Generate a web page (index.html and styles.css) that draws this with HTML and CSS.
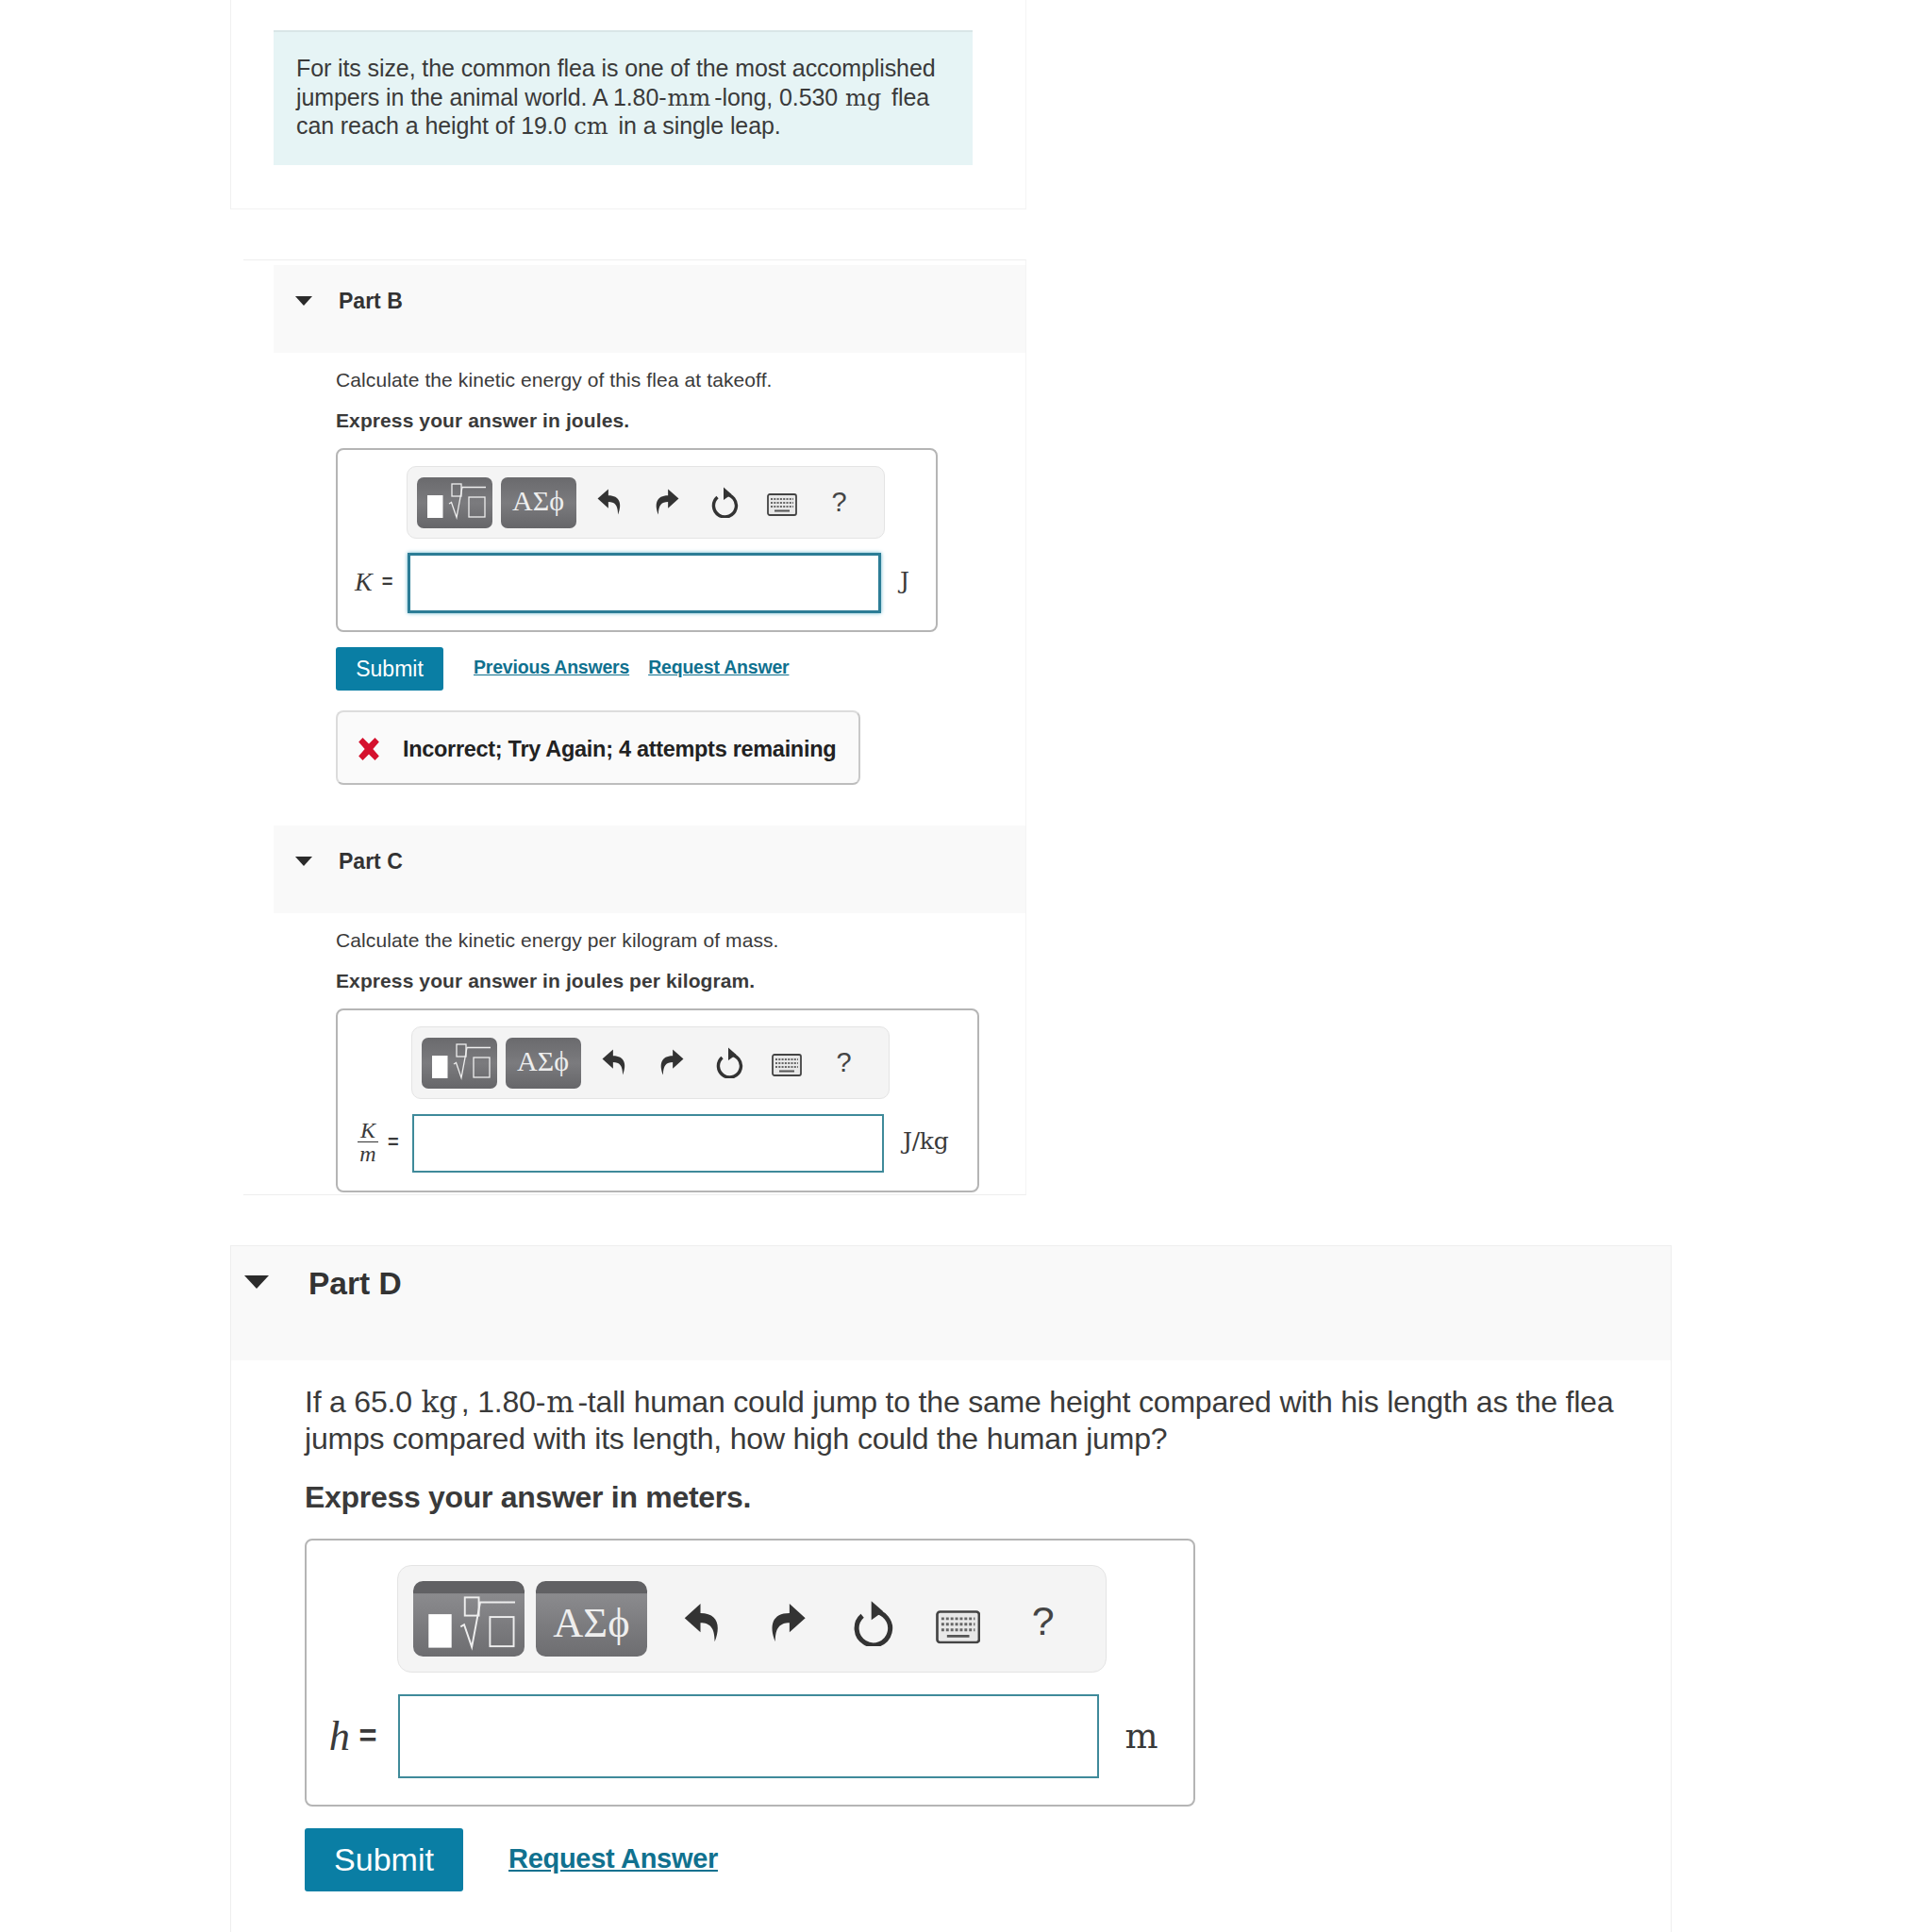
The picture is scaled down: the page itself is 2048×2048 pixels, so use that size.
FILE: index.html
```html
<!DOCTYPE html>
<html lang="en">
<head>
    <meta charset="UTF-8">
    <title>Part B, C, D</title>
    <link rel="stylesheet" href="styles.css">
</head>
<body>
    <svg class="defs" width="0" height="0">
        <symbol id="i-template" viewBox="0 0 80 54">
            <rect x="11" y="19" width="16.500" height="24" fill="#fff"/>
            <rect x="37" y="7" width="10" height="13" fill="none" stroke="#eee" stroke-width="1.300"/>
            <path d="M34 28l2.500-1.500 5.500 16 6-32h25" fill="none" stroke="#eee" stroke-width="1.300"/>
            <rect x="55" y="21" width="17" height="21" fill="none" stroke="#eee" stroke-width="1.300"/>
        </symbol>
        <symbol id="i-undo" viewBox="0 0 26 30">
            <path d="M12 3L2 12l10 9v-6c6 0 9 3 9 12 4-10 2-18-9-18z" fill="#333"/>
        </symbol>
        <symbol id="i-redo" viewBox="0 0 26 30">
            <path d="M14 3l10 9-10 9v-6c-6 0-9 3-9 12C1 17 3 9 14 9z" fill="#333"/>
        </symbol>
        <symbol id="i-reset" viewBox="0 0 30 34">
            <path d="M7.500 12A12 12 0 1 0 15 9" fill="none" stroke="#333" stroke-width="3.400"/>
            <path d="M14 1.500l8.500 7.500-8.500 6z" fill="#333"/>
        </symbol>
        <symbol id="i-keys" viewBox="0 0 32 24">
            <rect x="1" y="1" width="30" height="22" rx="2" fill="#e8e8e8" stroke="#444" stroke-width="1.800"/>
            <path d="M4 6h24M4 10h24M4 14h24" stroke="#666" stroke-width="2" stroke-dasharray="2 1.300"/>
            <path d="M8 18.500h16" stroke="#555" stroke-width="2"/>
        </symbol>
        <symbol id="i-cross" viewBox="0 0 24 24">
            <path d="M2 5l4-4 6 6 6-6 4 4-6 7 6 7-4 4-6-6-6 6-4-4 6-7z" fill="#d5112e"/>
        </symbol>
    </svg>

    <!-- Intro -->
    <section class="intro">
        <div class="intro-box">
            <p>For its size, the common flea is one of the most accomplished<br>jumpers in the animal world. A 1.80-<span class="unit">mm</span>-long, 0.530 <span class="unit">mg</span> flea<br>can reach a height of 19.0 <span class="unit">cm</span> in a single leap.</p>
        </div>
    </section>

    <section class="parts">
        <!-- Part B -->
        <div class="part-head"><span class="caret"></span><h2>Part B</h2></div>
        <div class="part-body">
            <p class="ask">Calculate the kinetic energy of this flea at takeoff.</p>
            <p class="express">Express your answer in joules.</p>
            <div class="answer answer-b">
                <div class="tools">
                    <span class="tbtn"><svg class="tpl"><use href="#i-template"/></svg></span>
                    <span class="tbtn greek">ΑΣϕ</span>
                    <span class="tcell"><svg class="ic"><use href="#i-undo"/></svg></span>
                    <span class="tcell"><svg class="ic"><use href="#i-redo"/></svg></span>
                    <span class="tcell"><svg class="ic"><use href="#i-reset"/></svg></span>
                    <span class="tcell"><svg class="ic kb"><use href="#i-keys"/></svg></span>
                    <span class="tcell help">?</span>
                </div>
                <div class="entry">
                    <span class="lhs"><i>K</i><small>=</small></span>
                    <div class="field focused"></div>
                    <span class="rhs">J</span>
                </div>
            </div>
            <div class="actions">
                <button class="submit">Submit</button>
                <a class="link" href="#">Previous Answers</a>
                <a class="link" href="#">Request Answer</a>
            </div>
            <div class="feedback">
                <svg class="cross"><use href="#i-cross"/></svg>
                <span>Incorrect; Try Again; 4 attempts remaining</span>
            </div>
        </div>

        <!-- Part C -->
        <div class="part-head head-c"><span class="caret"></span><h2>Part C</h2></div>
        <div class="part-body">
            <p class="ask">Calculate the kinetic energy per kilogram of mass.</p>
            <p class="express">Express your answer in joules per kilogram.</p>
            <div class="answer answer-c">
                <div class="tools">
                    <span class="tbtn"><svg class="tpl"><use href="#i-template"/></svg></span>
                    <span class="tbtn greek">ΑΣϕ</span>
                    <span class="tcell"><svg class="ic"><use href="#i-undo"/></svg></span>
                    <span class="tcell"><svg class="ic"><use href="#i-redo"/></svg></span>
                    <span class="tcell"><svg class="ic"><use href="#i-reset"/></svg></span>
                    <span class="tcell"><svg class="ic kb"><use href="#i-keys"/></svg></span>
                    <span class="tcell help">?</span>
                </div>
                <div class="entry">
                    <span class="lhs"><span class="frac"><i>K</i><i>m</i></span><small>=</small></span>
                    <div class="field"></div>
                    <span class="rhs">J/kg</span>
                </div>
            </div>
        </div>
    </section>

    <!-- Part D -->
    <section class="part-d">
        <div class="part-head"><span class="caret"></span><h2>Part D</h2></div>
        <div class="part-body">
            <p class="ask">If a 65.0 <span class="unit">kg</span>, 1.80-<span class="unit">m</span>-tall human could jump to the same height compared with his length as the flea<br>jumps compared with its length, how high could the human jump?</p>
            <p class="express">Express your answer in meters.</p>
            <div class="answer">
                <div class="tools">
                    <span class="tbtn"><svg class="tpl"><use href="#i-template"/></svg></span>
                    <span class="tbtn greek">ΑΣϕ</span>
                    <span class="tcell"><svg class="ic"><use href="#i-undo"/></svg></span>
                    <span class="tcell"><svg class="ic"><use href="#i-redo"/></svg></span>
                    <span class="tcell"><svg class="ic"><use href="#i-reset"/></svg></span>
                    <span class="tcell"><svg class="ic kb"><use href="#i-keys"/></svg></span>
                    <span class="tcell help">?</span>
                </div>
                <div class="entry">
                    <span class="lhs"><i>h</i><small>=</small></span>
                    <div class="field"></div>
                    <span class="rhs">m</span>
                </div>
            </div>
            <div class="actions">
                <button class="submit">Submit</button>
                <a class="link" href="#">Request Answer</a>
            </div>
        </div>
    </section>
</body>
</html>
```

FILE: styles.css
```css
/* General */
body {
    margin: 0;
    background: #fff;
    color: #3a3a3a;
    font-family: "Liberation Sans", Arial, sans-serif;
    height: 2048px;
    overflow: hidden;
}
p, h2 {
    margin: 0;
}
.defs {
    position: absolute;
}
.unit {
    margin: 0 4px 0 1px;
    font-family: "DejaVu Serif", serif;
    font-size: 0.970em;
    line-height: 1;
}

/* Intro */
.intro {
    margin-left: 244px;
    width: 844px;
    height: 222px;
    padding: 32px 56px 0 45px;
    box-sizing: border-box;
    border-left: 1px solid #f0f0f0;
    border-right: 1px solid #f4f4f4;
    border-bottom: 1px solid #f2f2f2;
}
.intro-box {
    height: 143px;
    box-sizing: border-box;
    padding: 23px 24px 0;
    background: #e6f4f5;
    border-top: 2px solid #d9e6e7;
    font-size: 25px;
    line-height: 30.500px;
    letter-spacing: -0.1px;
}

/* Parts B and C */
.parts {
    margin: 53px 0 0 258px;
    width: 830px;
    height: 992px;
    box-sizing: border-box;
    padding: 5px 0 0 32px;
    border-top: 1px solid #eee;
    border-bottom: 1px solid #eee;
    border-right: 1px solid #f4f4f4;
}
.part-head {
    display: flex;
    align-items: flex-start;
    height: 93px;
    box-sizing: border-box;
    padding: 25px 0 0 23px;
    background: #f9f9f9;
}
.head-c {
    margin-top: 43px;
}
.caret {
    width: 0;
    height: 0;
    margin-top: 8px;
    border-left: 9px solid transparent;
    border-right: 9px solid transparent;
    border-top: 10px solid #2b2b2b;
}
.part-head h2 {
    margin-left: 28px;
    font-size: 23px;
    line-height: 26px;
    color: #333;
}
.part-body {
    padding: 17px 0 0 66px;
}
.ask {
    font-size: 21px;
    line-height: 24px;
    letter-spacing: 0.1px;
}
.express {
    margin-top: 19px;
    font-size: 21px;
    line-height: 24px;
    font-weight: bold;
    letter-spacing: 0.1px;
}

/* Answer box */
.answer {
    width: 638px;
    height: 195px;
    margin-top: 17px;
    box-sizing: border-box;
    padding: 17px 0 0 73px;
    border: 2px solid #b5b5b5;
    border-radius: 8px;
    font-size: 10px;
}
.answer-c {
    width: 682px;
    padding-left: 78px;
}
.tools {
    display: flex;
    align-items: center;
    width: 50.700em;
    height: 7.700em;
    box-sizing: border-box;
    padding-left: 0.950em;
    background: #f4f4f4;
    border: 1px solid #e4e4e4;
    border-radius: 1em;
}
.tbtn {
    display: flex;
    align-items: center;
    justify-content: center;
    width: 8em;
    height: 5.400em;
    margin-right: 0.900em;
    border-radius: 0.700em;
    background: linear-gradient(#6a6a6d, #7b7b7e 50%, #666669);
}
.tpl {
    width: 8em;
    height: 5.400em;
}
.greek {
    color: #eee;
    font-family: "Liberation Serif", serif;
    font-size: 3em;
    width: 2.667em;
    height: 1.800em;
    margin-right: 0;
    padding-bottom: 0.100em;
    box-sizing: border-box;
    border-radius: 0.233em;
}
.tcell {
    display: flex;
    align-items: center;
    justify-content: center;
    width: 6.100em;
    margin-top: -0.200em;
}
.greek + .tcell {
    margin-left: 0.450em;
}
.ic {
    width: 3em;
    height: 3.400em;
}
.kb {
    width: 3.200em;
    height: 2.400em;
    margin-top: 0.700em;
}
.help {
    font-size: 2.900em;
    width: 2.103em;
    margin-top: 0;
    color: #444;
}
.entry {
    display: flex;
    align-items: center;
    margin-top: 1.500em;
    margin-left: -7.300em;
}
.answer-c .entry {
    margin-top: 1.600em;
    margin-left: -7.800em;
}
.lhs {
    display: flex;
    align-items: center;
    width: 7.400em;
    margin-top: -0.300em;
    box-sizing: border-box;
    padding-left: 1.800em;
    font-family: "Liberation Serif", serif;
    white-space: nowrap;
}
.lhs i {
    font-size: 2.800em;
}
.lhs small {
    margin-left: 0.500em;
    font-family: "Liberation Sans", sans-serif;
    font-size: 2em;
    font-weight: bold;
}
.answer-c .lhs {
    width: 7.900em;
    padding-left: 2.100em;
}
.frac {
    display: inline-flex;
    flex-direction: column;
    align-items: center;
}
.frac i {
    font-size: 2.400em;
    line-height: 1;
}
.frac i:first-child {
    border-bottom: 1px solid #333;
    padding: 0 3px;
}
.field {
    width: 50.200em;
    height: 6.200em;
    box-sizing: border-box;
    background: #fff;
    border: 2px solid #3f8a9a;
}
.answer-c .field {
    width: 50em;
}
.focused {
    height: 6.400em;
    border: 3px solid #2c7d96;
    box-shadow: 0 0 4px #66b5cc;
}
.rhs {
    margin-top: -0.200em;
    margin-left: 0.800em;
    font-family: "DejaVu Serif", serif;
    font-size: 2.500em;
    letter-spacing: -0.3px;
}

/* Submit row */
.actions {
    display: flex;
    align-items: center;
    margin-top: 16px;
    gap: 20px;
}
.submit {
    width: 114px;
    height: 46px;
    margin-right: 12px;
    border: none;
    border-radius: 3px;
    background: #0a7ea4;
    color: #fff;
    font-family: inherit;
    font-size: 23px;
}
.link {
    margin-top: -3px;
    color: #10718f;
    font-size: 19.500px;
    font-weight: bold;
    letter-spacing: -0.2px;
}
.feedback {
    display: flex;
    align-items: center;
    width: 556px;
    height: 79px;
    margin-top: 21px;
    box-sizing: border-box;
    padding: 3px 0 0 20px;
    background: #fafafa;
    border: 2px solid #dcdcdc;
    border-bottom-color: #bdbdbd;
    border-right-color: #c9c9c9;
    border-radius: 8px;
    color: #222;
    font-size: 23.500px;
    font-weight: bold;
    letter-spacing: -0.3px;
}
.cross {
    width: 26px;
    height: 26px;
    margin-right: 23px;
}

/* Part D */
.part-d {
    margin: 53px 0 0 244px;
    width: 1528px;
    height: 760px;
    box-sizing: border-box;
    border: 1px solid #eee;
}
.part-d .part-head {
    height: 121px;
    padding: 20px 0 0 14px;
}
.part-d .caret {
    margin-top: 11px;
    border-left-width: 13px;
    border-right-width: 13px;
    border-top-width: 14px;
}
.part-d .part-head h2 {
    margin-left: 42px;
    font-size: 33.500px;
    line-height: 40px;
}
.part-d .part-body {
    padding: 25px 40px 0 78px;
}
.part-d .ask {
    font-size: 32px;
    line-height: 39px;
    letter-spacing: -0.2px;
}
.part-d .express {
    margin-top: 23px;
    font-size: 32px;
    line-height: 38px;
    letter-spacing: -0.3px;
}
.part-d .answer {
    width: 944px;
    height: 284px;
    margin-top: 25px;
    padding: 26px 0 0 96px;
    font-size: 14.800px;
}
.part-d .tools {
    width: 50.800em;
    padding-left: 1.050em;
}
.part-d .tbtn {
    margin-right: 0.800em;
    background: linear-gradient(#616164 16%, #8b8b8e 17%, #7b7b7e 60%, #6d6d70);
}
.part-d .tpl {
    margin-top: 1em;
}
.part-d .greek {
    margin-right: 0;
    padding: 0.200em 0 0;
}
.part-d .greek + .tcell {
    margin-left: 0.900em;
}
.part-d .tcell {
    margin-top: 0.500em;
}
.part-d .help {
    margin-top: 0.100em;
}
.part-d .entry {
    margin-left: -6.490em;
    margin-top: 1.550em;
}
.part-d .lhs {
    width: 6.550em;
    margin-top: 0;
    padding-left: 1.600em;
}
.part-d .lhs i {
    font-size: 3em;
}
.part-d .lhs small {
    margin-left: 0.300em;
    font-size: 2.200em;
}
.part-d .field {
    height: 6em;
}
.part-d .rhs {
    margin-top: 0;
    margin-left: 0.750em;
}
.part-d .actions {
    margin-top: 23px;
    gap: 30px;
}
.part-d .submit {
    width: 168px;
    height: 67px;
    margin-right: 18px;
    font-size: 34px;
}
.part-d .link {
    font-size: 29px;
    margin-top: -2px;
    letter-spacing: -0.3px;
}
```
